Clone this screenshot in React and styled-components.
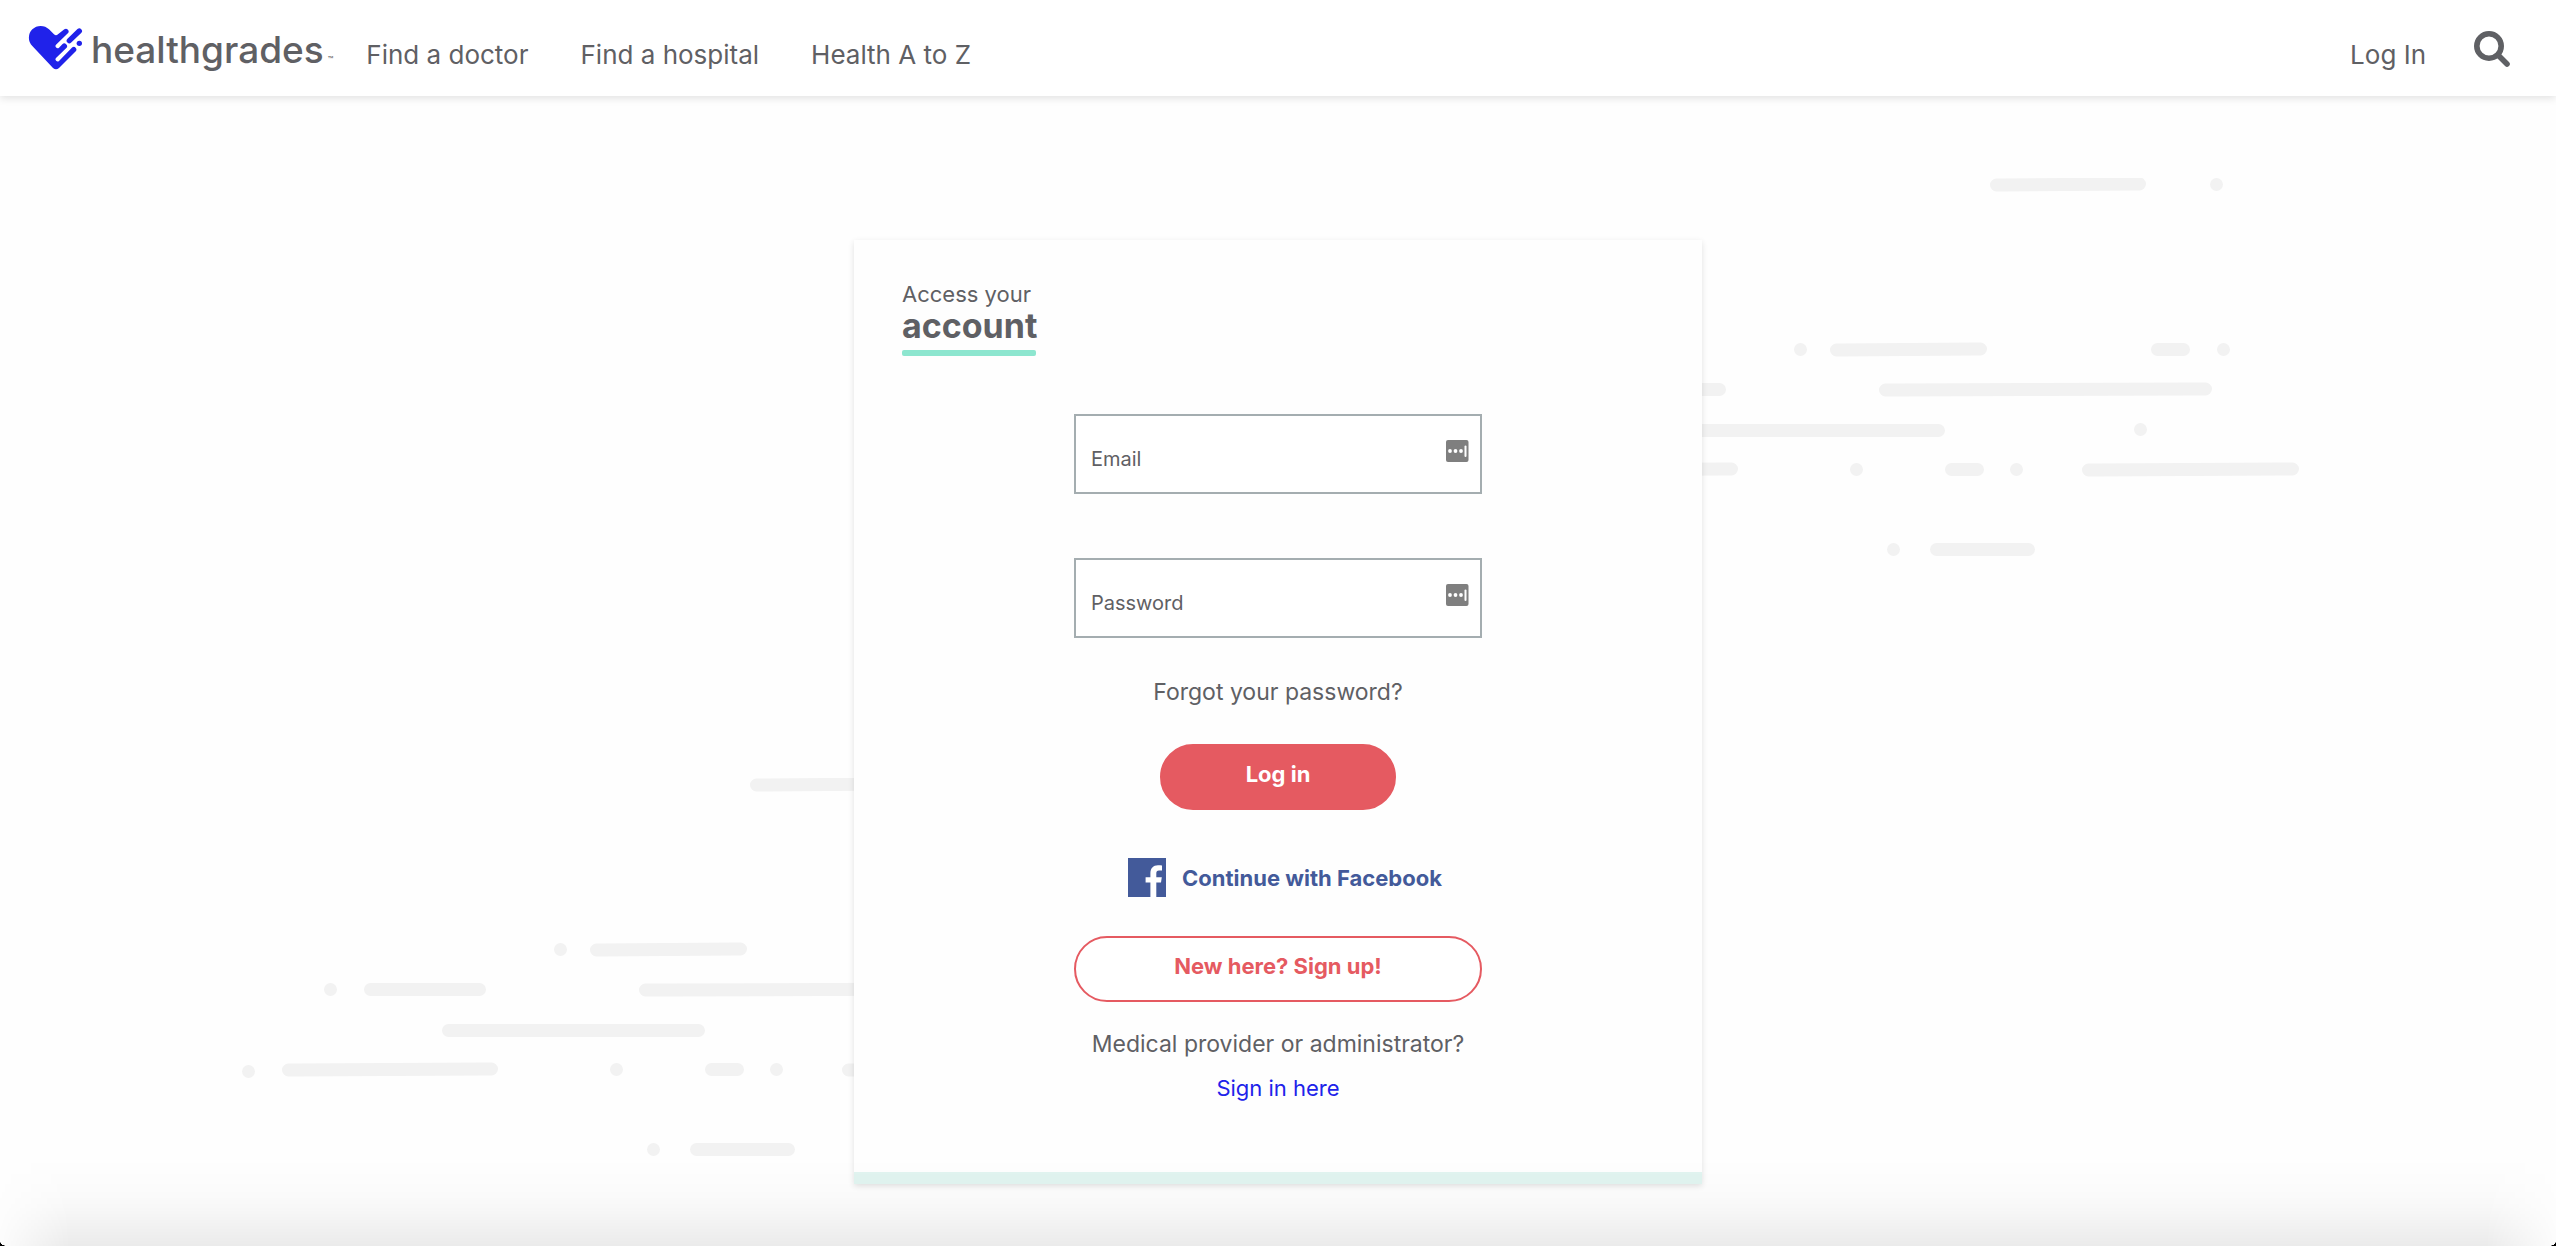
import React from "react";
import styled, { createGlobalStyle } from "styled-components";

const color = {
  ink: "#5f6064",
  blue: "#2022ea",
  coral: "#e55a61",
  facebook: "#435a9a",
  mint: "#8de6cf",
  mintPale: "#e1f4f0",
  fieldBorder: "#a4adb0",
  streak: "#f2f2f2",
};

const GlobalStyle = createGlobalStyle`
  *, *::before, *::after { box-sizing: border-box; }
  body {
    margin: 0;
    background: #fefefe;
    color: ${color.ink};
    font-family: Inter, "Liberation Sans", sans-serif;
    font-size: 22px;
  }
  a { color: inherit; text-decoration: none; }
  button, input { font: inherit; color: inherit; }
`;

const Page = styled.div`
  position: relative;
  min-height: 100vh;
  overflow: hidden;
`;

const Header = styled.header`
  position: relative;
  z-index: 2;
  display: flex;
  align-items: center;
  height: 96px;
  padding: 0 46px 0 28px;
  background: #fff;
  box-shadow: 0 2px 8px rgba(0, 0, 0, 0.12);
`;

const Brand = styled.a`
  display: flex;
  align-items: center;
  gap: 8px;
`;

const Wordmark = styled.span`
  padding-top: 4px;
  font-size: 37px;
  line-height: 44px;
  font-weight: 500;
`;

const Trademark = styled.span`
  margin-left: 4px;
  font-size: 9px;
  line-height: 9px;
`;

const Nav = styled.nav`
  display: flex;
  flex: 1;
  gap: 52px;
  margin-left: 33px;
`;

const NavLink = styled.a`
  padding-top: 14px;
  font-size: 26px;
  line-height: 32px;
  white-space: nowrap;
`;

const SearchButton = styled.button`
  display: flex;
  margin-left: 48px;
  padding: 2px 0 0;
  border: 0;
  background: none;
  cursor: pointer;
`;

const Backdrop = styled.svg`
  position: absolute;
  top: ${(p) => (p.$side === "right" ? 178 : 778)}px;
  left: calc(50% ${(p) => (p.$side === "right" ? "+ 204px" : "- 1036px")});
  fill: ${color.streak};
`;

const Main = styled.main`
  display: flex;
  justify-content: center;
  padding: 144px 24px 62px;
`;

const Card = styled.section`
  position: relative;
  width: 100%;
  max-width: 848px;
  padding: 40px 48px 68px;
  background: #fefefe;
  border-bottom: 12px solid ${color.mintPale};
  box-shadow: 0 2px 6px rgba(0, 0, 0, 0.12);
`;

const Title = styled.h1`
  display: flex;
  flex-direction: column;
  align-items: flex-start;
  margin: 0;
  font-weight: 400;
  font-size: 22px;
  line-height: 28px;

  &::after {
    content: "";
    width: 134px;
    height: 6px;
    margin-top: 6px;
    border-radius: 2px;
    background: ${color.mint};
  }
`;

const TitleStrong = styled.strong`
  font-weight: 700;
  font-size: 34px;
  line-height: 36px;
`;

const Form = styled.form`
  display: flex;
  flex-direction: column;
  align-items: center;
  width: 100%;
  max-width: 408px;
  margin: 58px auto 0;
`;

const Fields = styled.div`
  display: grid;
  gap: 64px;
  width: 100%;
`;

const FieldBox = styled.div`
  position: relative;
`;

/* The label rests inside the empty box and gives way to typed text. */
const FieldLabel = styled.label`
  position: absolute;
  top: 30px;
  left: 17px;
  font-size: 20px;
  line-height: 30px;
  pointer-events: none;
`;

const Input = styled.input`
  display: block;
  width: 100%;
  height: 80px;
  padding: 10px 48px 0 15px;
  border: 2px solid ${color.fieldBorder};
  border-radius: 0;
  background: #fff;
  font-size: 20px;

  &:focus + ${FieldLabel},
  &:not(:placeholder-shown) + ${FieldLabel} {
    top: 4px;
    font-size: 16px;
  }
`;

const KeyBadge = styled.svg`
  position: absolute;
  top: 26px;
  right: 13px;
`;

const TextLink = styled.a`
  font-size: 23px;
  line-height: 32px;
  white-space: nowrap;
`;

const ForgotLink = styled(TextLink)`
  margin-top: 38px;
`;

const Pill = styled.button`
  width: ${(p) => (p.$outline ? "100%" : "236px")};
  height: 66px;
  padding: 0 0 6px;
  border: 2px solid ${color.coral};
  border-radius: 33px;
  background: ${(p) => (p.$outline ? "#fff" : color.coral)};
  color: ${(p) => (p.$outline ? color.coral : "#fff")};
  font-weight: 700;
  cursor: pointer;
`;

const LoginButton = styled(Pill)`
  margin-top: 36px;
`;

const SignupButton = styled(Pill)`
  margin-top: 39px;
`;

const FacebookButton = styled.button`
  display: flex;
  align-items: center;
  gap: 16px;
  margin-top: 48px;
  padding: 0 0 0 14px;
  border: 0;
  background: none;
  color: ${color.facebook};
  font-weight: 700;
  white-space: nowrap;
  cursor: pointer;
`;

const ProviderNote = styled.p`
  margin: 26px 0 12px;
  font-size: 23px;
  line-height: 32px;
  white-space: nowrap;
`;

const ProviderLink = styled.a`
  line-height: 32px;
  color: ${color.blue};
`;

const BottomShade = styled.div`
  position: fixed;
  z-index: 3;
  right: 0;
  bottom: 0;
  left: 0;
  height: 88px;
  pointer-events: none;
  background: linear-gradient(
    to bottom,
    transparent 0%,
    rgba(0, 0, 0, 0.01) 36%,
    rgba(0, 0, 0, 0.024) 55%,
    rgba(0, 0, 0, 0.056) 82%,
    rgba(0, 0, 0, 0.074) 100%
  );
  mask-image: linear-gradient(
    to right,
    rgba(0, 0, 0, 0.1),
    #000 70px,
    #000 calc(100% - 70px),
    rgba(0, 0, 0, 0.1)
  );
`;

const WindowCorner = styled.div`
  position: fixed;
  z-index: 4;
  bottom: 0;
  ${(p) => p.$side}: 0;
  width: 7px;
  height: 4px;
  background: radial-gradient(
    farthest-side at ${(p) => (p.$side === "left" ? "100%" : "0%")} 0%,
    transparent 90%,
    #000 100%
  );
`;

/* Left edge, top edge, width, right-hand rise of each streak. */
const STREAKS = [
  [508, 0, 156, 1], [728, 0, 13, 0],
  [312, 165, 13, 0], [348, 165, 157, 1], [669, 165, 39, 0], [735, 165, 13, 0],
  [82, 205, 13, 0], [122, 205, 122, 0], [397, 205, 333, 1],
  [200, 246, 263, 0], [652, 245, 13, 0],
  [0, 287, 13, 0], [40, 285, 216, 1], [368, 285, 13, 0], [463, 285, 39, 0],
  [528, 285, 13, 0], [600, 285, 217, 1],
  [405, 365, 13, 0], [448, 365, 105, 0],
];

function Streaks({ side }) {
  return (
    <Backdrop $side={side} width="820" height="382" viewBox="0 0 820 382" aria-hidden="true">
      {STREAKS.map(([x, y, w, rise]) => (
        <path
          key={`${x}-${y}`}
          d={`M${x + 6.5} ${y + rise / 2}L${x + w - 6.5} ${y - rise / 2}a6.5 6.5 0 0 1 0 13L${x + 6.5} ${y + 13 + rise / 2}a6.5 6.5 0 0 1 0 -13z`}
        />
      ))}
    </Backdrop>
  );
}

function HeartLogo() {
  return (
    <svg width="55" height="46" viewBox="84 75 165 138" fill={color.blue} aria-hidden="true">
      <path d="M97 138A35 35 0 0 1 147 88L162 103Q168 109 174 103L193 88A8 8 0 0 1 205 98L168 134A6.4 6.4 0 0 0 177 143L187 133A8 8 0 0 1 199 144L168 174A6.4 6.4 0 0 0 177 183L217 142A8 8 0 0 1 228 153L177 204Q168 212 159 204Z" />
      <path d="M238 93L208 122" stroke={color.blue} strokeWidth="16" strokeLinecap="round" />
      <circle cx="238" cy="130" r="8" />
    </svg>
  );
}

function SearchIcon() {
  return (
    <svg width="36" height="36" viewBox="0 0 36 36" fill="none" stroke={color.ink} strokeLinecap="round" aria-hidden="true">
      <circle cx="15" cy="15" r="12.2" strokeWidth="5.6" />
      <path d="M24.5 24.5L33 33" strokeWidth="5.6" />
    </svg>
  );
}

function FacebookIcon() {
  return (
    <svg width="38" height="39" viewBox="0 0 38 39" aria-hidden="true">
      <path fill={color.facebook} d="M0 0h38v39H0z" />
      <path
        fill="#fff"
        d="M22.4 39V24.4h-4.8v-5.2h4.8v-3.6c0-5.4 2.8-8.4 7.6-8.4 1.6 0 3 .1 4 .3v5h-3c-2 0-2.7 1-2.7 2.9v3.8h5.5l-.8 5.2h-4.7V39z"
      />
    </svg>
  );
}

function Field({ id, type, label }) {
  return (
    <FieldBox>
      <Input id={id} name={id} type={type} placeholder=" " />
      <FieldLabel htmlFor={id}>{label}</FieldLabel>
      <KeyBadge width="23" height="22" viewBox="0 0 23 22" fill="#fff" aria-hidden="true">
        <rect width="22.5" height="22" rx="2" fill="#7f7f7f" />
        <circle cx="4" cy="11" r="1.9" />
        <circle cx="9.5" cy="11" r="1.9" />
        <circle cx="15" cy="11" r="1.9" />
        <rect x="18.5" y="5.5" width="2" height="11.5" rx="1" />
      </KeyBadge>
    </FieldBox>
  );
}

export default function App() {
  return (
    <Page>
      <GlobalStyle />
      <Header>
        <Brand href="#">
          <HeartLogo />
          <Wordmark>
            healthgrades<Trademark>™</Trademark>
          </Wordmark>
        </Brand>
        <Nav>
          <NavLink href="#doctor">Find a doctor</NavLink>
          <NavLink href="#hospital">Find a hospital</NavLink>
          <NavLink href="#health">Health A to Z</NavLink>
        </Nav>
        <NavLink href="#login">Log In</NavLink>
        <SearchButton type="button" aria-label="Search">
          <SearchIcon />
        </SearchButton>
      </Header>

      <Streaks side="right" />
      <Streaks side="left" />

      <Main>
        <Card>
          <Title>
            Access your
            <TitleStrong>account</TitleStrong>
          </Title>
          <Form onSubmit={(e) => e.preventDefault()}>
            <Fields>
              <Field id="email" type="email" label="Email" />
              <Field id="password" type="password" label="Password" />
            </Fields>
            <ForgotLink href="#forgot">Forgot your password?</ForgotLink>
            <LoginButton type="submit">Log in</LoginButton>
            <FacebookButton type="button">
              <FacebookIcon />
              Continue with Facebook
            </FacebookButton>
            <SignupButton type="button" $outline>
              New here? Sign up!
            </SignupButton>
            <ProviderNote>Medical provider or administrator?</ProviderNote>
            <ProviderLink href="#provider">Sign in here</ProviderLink>
          </Form>
        </Card>
      </Main>

      <BottomShade />
      <WindowCorner $side="left" />
      <WindowCorner $side="right" />
    </Page>
  );
}
